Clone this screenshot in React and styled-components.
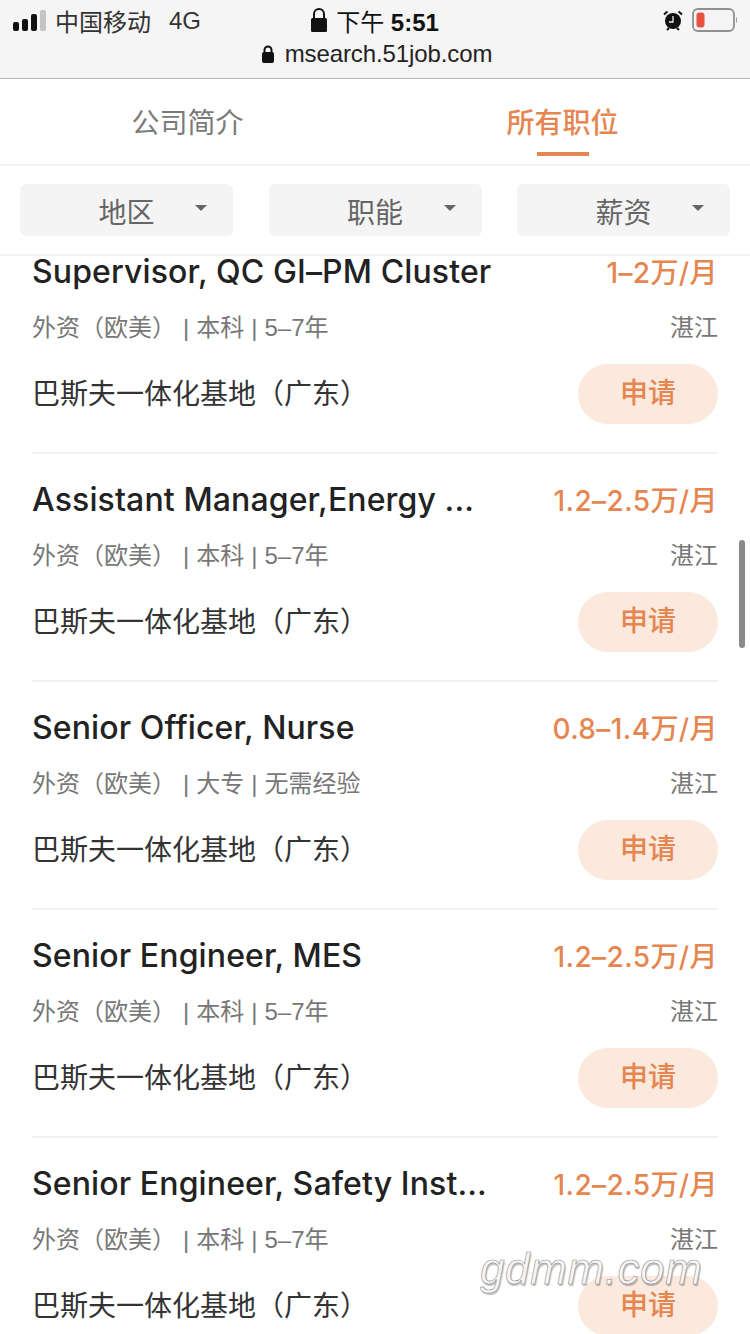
import styled, { createGlobalStyle } from "styled-components";

const jobs = [
  { title: "Supervisor, QC GI–PM Cluster", salary: "1–2万/月", edu: "本科", exp: "5–7年" },
  { title: "Assistant Manager,Energy ...", salary: "1.2–2.5万/月", edu: "本科", exp: "5–7年" },
  { title: "Senior Officer, Nurse", salary: "0.8–1.4万/月", edu: "大专", exp: "无需经验" },
  { title: "Senior Engineer, MES", salary: "1.2–2.5万/月", edu: "本科", exp: "5–7年" },
  { title: "Senior Engineer, Safety Inst...", salary: "1.2–2.5万/月", edu: "本科", exp: "5–7年" },
];

const App = () => {
  return (
    <Page>
      <GlobalStyle />
      <BrowserBar>
        <StatusRow>
          <StatusLeft>
            <SignalIcon />
            <span>中国移动</span>
            <Network>4G</Network>
          </StatusLeft>
          <StatusTime>
            <LockClosedIcon />
            <span>
              下午 <Clock>5:51</Clock>
            </span>
          </StatusTime>
          <StatusRight>
            <AlarmIcon />
            <BatteryIcon />
          </StatusRight>
        </StatusRow>
        <UrlRow>
          <LockIcon />
          <span>msearch.51job.com</span>
        </UrlRow>
      </BrowserBar>

      <Tabs>
        <Tab>公司简介</Tab>
        <Tab $active>所有职位</Tab>
      </Tabs>

      <Filters>
        {["地区", "职能", "薪资"].map((name) => (
          <FilterButton key={name}>
            <span>{name}</span>
            <Caret />
          </FilterButton>
        ))}
      </Filters>

      <List>
        {jobs.map((job) => (
          <Job key={job.title}>
            <JobRow>
              <JobTitle>{job.title}</JobTitle>
              <Salary>{job.salary}</Salary>
            </JobRow>
            <MetaRow>
              <span>
                外资（欧美）<Sep>|</Sep>
                {job.edu}
                <Sep>|</Sep>
                {job.exp}
              </span>
              <span>湛江</span>
            </MetaRow>
            <CompanyRow>
              <Company>巴斯夫一体化基地（广东）</Company>
              <ApplyButton>申请</ApplyButton>
            </CompanyRow>
          </Job>
        ))}
      </List>

      <Scrollbar />
      <Watermark>gdmm.com</Watermark>
    </Page>
  );
};

export default App;

const SignalIcon = () => (
  <svg width="34" height="21" viewBox="0 0 34 21">
    <rect x="0" y="12" width="6" height="9" rx="2" fill="#111" />
    <rect x="9" y="9" width="6" height="12" rx="2" fill="#111" />
    <rect x="18" y="4" width="6" height="17" rx="2" fill="#111" />
    <rect x="27" y="0" width="6" height="21" rx="2" fill="#c4c4c4" />
  </svg>
);

const LockClosedIcon = () => (
  <svg width="18" height="26" viewBox="0 0 18 26">
    <path d="M4 12V7a5 5 0 0 1 10 0v5" fill="none" stroke="#111" strokeWidth="2" />
    <rect x="1" y="11" width="16" height="14" rx="1.5" fill="#111" />
  </svg>
);

const LockIcon = () => (
  <svg width="14" height="20" viewBox="0 0 14 20">
    <path d="M3.5 9V6a3.5 3.5 0 0 1 7 0v3" fill="none" stroke="#111" strokeWidth="2" />
    <rect x="1" y="8" width="12" height="11" rx="2" fill="#111" />
  </svg>
);

const AlarmIcon = () => (
  <svg width="20" height="21" viewBox="0 0 20 21">
    <circle cx="10" cy="11" r="8" fill="#111" />
    <path d="M10 6v6h-4" fill="none" stroke="#eee" strokeWidth="1.3" />
    <path d="M1 4.5l3.5-3M19 4.5l-3.5-3M4 20l2-2M16 20l-2-2" stroke="#111" strokeWidth="2" />
  </svg>
);

const BatteryIcon = () => (
  <svg width="46" height="24" viewBox="0 0 46 24">
    <rect x="1" y="1" width="41" height="22" rx="5" fill="none" stroke="#8f8f8f" strokeWidth="1.8" />
    <rect x="4.5" y="4.5" width="8" height="15" rx="3" fill="#e8503f" />
    <path d="M44 9c1.5.6 1.5 5.4 0 6z" fill="#9a9a9a" />
  </svg>
);

const GlobalStyle = createGlobalStyle`
  html, body {
    margin: 0;
    padding: 0;
    background: #fff;
  }
  body {
    font-family: "Liberation Sans", "Noto Sans CJK SC", sans-serif;
  }
`;

const Page = styled.div`
  position: relative;
  width: 750px;
  height: 1334px;
  overflow: hidden;
  background: #fff;
  display: flex;
  flex-direction: column;
`;

const BrowserBar = styled.header`
  flex: none;
  height: 79px;
  box-sizing: border-box;
  background: #f6f5f5;
  border-bottom: 1px solid #b8b8b8;
  color: #222;
`;

const StatusRow = styled.div`
  height: 40px;
  display: grid;
  grid-template-columns: 1fr auto 1fr;
  align-items: center;
  padding: 0 12px 0 13px;
`;

const StatusLeft = styled.div`
  display: flex;
  align-items: center;
  gap: 8px;
  font-size: 24px;
  color: #333;
`;

const Network = styled.span`
  margin-left: 10px;
  font-size: 24px;
  padding-top: 2px;
`;

const StatusTime = styled.div`
  display: flex;
  align-items: center;
  gap: 8px;
  font-size: 24px;
  color: #111;
  margin-left: -2px;
`;

const Clock = styled.span`
  font-weight: 700;
`;

const StatusRight = styled.div`
  display: flex;
  align-items: center;
  justify-content: flex-end;
  gap: 9px;
`;

const UrlRow = styled.div`
  height: 28px;
  display: flex;
  align-items: center;
  justify-content: center;
  gap: 10px;
  font-size: 24px;
  letter-spacing: -0.1px;
  color: #222;
  padding-left: 3px;
`;

const Tabs = styled.nav`
  flex: none;
  height: 87px;
  box-sizing: border-box;
  display: grid;
  grid-template-columns: 1fr 1fr;
  border-bottom: 2px solid #f3f3f3;
  background: #fff;
`;

const Tab = styled.div`
  position: relative;
  display: flex;
  justify-content: center;
  padding-top: 25px;
  font-size: 28px;
  line-height: 40px;
  font-weight: ${(p) => (p.$active ? 500 : 400)};
  color: ${(p) => (p.$active ? "#e58650" : "#7a7a7a")};

  ${(p) =>
    p.$active &&
    `
    &::after {
      content: "";
      position: absolute;
      left: 162px;
      bottom: 8px;
      width: 52px;
      height: 4px;
      background: #e58650;
    }
  `}
`;

const Filters = styled.div`
  flex: none;
  position: relative;
  z-index: 1;
  height: 90px;
  box-sizing: border-box;
  display: flex;
  justify-content: space-between;
  padding: 18px 20px 0;
  background: #fff;
  border-bottom: 2px solid #f3f3f3;
`;

const FilterButton = styled.div`
  position: relative;
  width: 213px;
  height: 52px;
  box-sizing: border-box;
  padding-top: 2px;
  border-radius: 6px;
  background: #f4f4f4;
  display: flex;
  align-items: center;
  justify-content: center;
  font-size: 28px;
  color: #666;
`;

const Caret = styled.i`
  position: absolute;
  right: 26px;
  top: 21px;
  width: 0;
  height: 0;
  border-left: 6px solid transparent;
  border-right: 6px solid transparent;
  border-top: 6px solid #666;
`;

const List = styled.main`
  flex: 1;
  min-height: 0;
  overflow: hidden;
  margin-top: -30px;
  padding: 0 32px;
`;

const Job = styled.article`
  height: 228px;
  box-sizing: border-box;
  border-bottom: 2px solid #f1f1f1;
  padding-top: 23px;
`;

const JobRow = styled.div`
  height: 44px;
  display: flex;
  align-items: center;
  justify-content: space-between;
`;

const JobTitle = styled.div`
  font-size: 32px;
  font-weight: 500;
  letter-spacing: 0.12px;
  color: #222;
  font-family: "Inter", "Noto Sans CJK SC", sans-serif;
`;

const Salary = styled.div`
  font-size: 28px;
  font-weight: 500;
  letter-spacing: 0.4px;
  color: #e58650;
  font-family: "Inter", "Noto Sans CJK SC", sans-serif;
`;

const MetaRow = styled.div`
  height: 36px;
  margin-top: 14px;
  display: flex;
  align-items: center;
  justify-content: space-between;
  font-size: 24px;
  color: #777;
`;

const Sep = styled.span`
  margin: 0 7px;
`;

const CompanyRow = styled.div`
  margin-top: 21px;
  display: flex;
  align-items: center;
  justify-content: space-between;
`;

const Company = styled.div`
  padding-bottom: 4px;
  font-size: 28px;
  color: #333;
`;

const ApplyButton = styled.button`
  width: 140px;
  height: 60px;
  padding: 0 0 6px;
  border: none;
  border-radius: 30px;
  background: #fbe9de;
  color: #e58650;
  font-family: inherit;
  font-size: 28px;
  font-weight: 500;
`;

const Scrollbar = styled.div`
  position: absolute;
  right: 5px;
  top: 540px;
  width: 6px;
  height: 108px;
  border-radius: 3px;
  background: #8a8a8a;
`;

const Watermark = styled.div`
  position: absolute;
  left: 480px;
  top: 1244px;
  font-family: "Liberation Sans", sans-serif;
  font-style: italic;
  font-size: 44px;
  letter-spacing: 0.6px;
  color: #f6f6f6;
  -webkit-text-stroke: 0.6px #8f8f8f;
  text-shadow: 1px 2px 1px rgba(0, 0, 0, 0.25);
`;
